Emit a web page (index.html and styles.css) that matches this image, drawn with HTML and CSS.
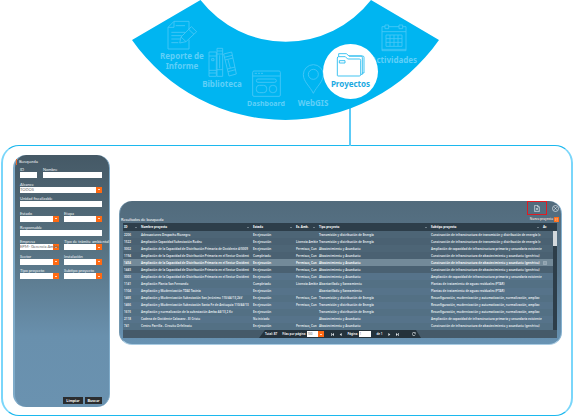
FILE: index.html
```html
<!DOCTYPE html>
<html lang="es">
<head>
<meta charset="utf-8">
<meta name="viewport" content="width=device-width, initial-scale=1">
<title>Proyectos</title>
<link rel="stylesheet" href="styles.css">
</head>
<body>
<nav class="arc" aria-label="Módulos">
  <svg class="arc-shape" viewBox="132 0 310 146" aria-hidden="true">
    <path d="M350 100V146" fill="none" stroke="#5ccbf7" stroke-width="2"/>
    <path d="M200.500 0A108 108 0 0 0 371 0L439 40A187.300 187.300 0 0 1 132 40Z" fill="#00b5f1"/>
  </svg>
  <a class="item reporte" href="#reporte">
    <svg viewBox="140 62 90 90" width="30" height="30"><path d="M206 90V66H161L143 84V149H206V121M161 66V84H143M166 79H194M153 99H194M153 109H184M153 119H179M153 130H174M178 131L182 113L213 82L229 97L197 127ZM182 113L197 127M205 90L221 105"/></svg>
    <span>Reporte de Informe</span>
  </a>
  <a class="item biblioteca" href="#biblioteca">
    <svg viewBox="268 139 87 90" width="29" height="30"><path d="M271 154H293V227H271ZM271 166H293M271 209H293M271 217H293M279 174H286V180H279ZM295 143H312V227H295ZM295 151H312M295 160H312M295 207H312M303 164V203M315 160L339 154L353 220L331 226ZM317 170L341 164M319 178L343 172M326 205L349 199M328 213L351 207M328 177L335 202"/></svg>
    Biblioteca
  </a>
  <a class="item dashboard" href="#dashboard">
    <svg viewBox="394 208 87 81" width="29" height="27"><path d="M400 211H475Q479 211 479 215V283Q479 287 475 287H400Q396 287 396 283V215Q396 211 400 211ZM396 226H479M402 218H409M412 218H418M421 218H427"/><rect x="407" y="235" width="60" height="10" rx="5"/><rect x="407" y="254" width="31" height="22" rx="9"/><rect x="446" y="254" width="22" height="22" rx="10"/></svg>
    Dashboard
  </a>
  <a class="item webgis" href="#webgis">
    <svg viewBox="63 190 66 90" width="22" height="30"><path d="M97 278C87 257 67 243 67 222A30 30 0 0 1 127 222C127 243 107 257 97 278Z"/><circle cx="97" cy="221" r="15"/></svg>
    WebGIS
  </a>
  <a class="item actividades" href="#actividades">
    <svg viewBox="302 70 78 84" width="26" height="28"><path d="M314 78H305V150H377V78H367M325 78H356M305 93H377M314 73H325V84H314ZM356 73H367V84H356ZM317 103H365V137H317ZM317 114H365M317 125H365M329 103V137M341 103V137M353 103V137M305 146H377"/></svg>
    Actividades
  </a>
  <a class="item proyectos" href="#proyectos" aria-current="page">
    <svg viewBox="170 155 87 75" width="29" height="25"><path d="M174 225V173Q174 169 178 169H198L205 176H240Q244 176 244 180V223Q244 227 240 227H176Q174 227 174 225ZM178 169V160H201L209 167H246Q249 167 249 171V222H244M209 167H250Q254 167 254 171V218H249M180 181H197V188H180Z"/></svg>
    Proyectos
  </a>
</nav>

<main class="frame">
  <form class="search">
    <h2>Busqueda</h2>
    <div class="fields">
      <div class="field short"><label for="id">ID</label><input id="id"></div>
      <div class="field long"><label for="nombre">Nombre</label><input id="nombre"></div>
      <div class="field full"><label for="alcance">Alcance</label><select id="alcance"><option>TODOS</option></select></div>
      <div class="field full"><label for="unidad">Unidad fiscalizable</label><input id="unidad"></div>
      <div class="field left"><label for="estado">Estado</label><select id="estado"><option></option></select></div>
      <div class="field right"><label for="etapa">Etapa</label><select id="etapa"><option></option></select></div>
      <div class="field full"><label for="resp">Responsable</label><input id="resp"></div>
      <div class="field left"><label for="empresa">Empresa</label><select id="empresa"><option>EPM- Gerencia Ambie</option></select></div>
      <div class="field right"><label for="tramite">Tipo de trámite ambiental</label><select id="tramite"><option></option></select></div>
      <div class="field left"><label for="sector">Sector</label><select id="sector"><option></option></select></div>
      <div class="field right"><label for="instalacion">Instalación</label><select id="instalacion"><option></option></select></div>
      <div class="field left"><label for="tipo">Tipo proyecto</label><select id="tipo"><option></option></select></div>
      <div class="field right"><label for="subtipo">Subtipo proyecto</label><select id="subtipo"><option></option></select></div>
    </div>
    <div class="actions"><button type="button">Limpiar</button><button type="button">Buscar</button></div>
  </form>

  <section class="results">
    <div class="toolbar">
      <button class="export" type="button" aria-label="Exportar"><svg viewBox="0 0 18 21" width="6" height="7"><path d="M2 1H11L16 6V20H2ZM11 1V6H16M6 9L12 16M12 9L6 16"/></svg></button>
      <button class="close" type="button" aria-label="Cerrar"><svg viewBox="0 0 21 21" width="7" height="7"><circle cx="10.500" cy="10.500" r="9"/><path d="M7 7L14 14M14 7L7 14"/></svg></button>
    </div>
    <div class="heading">
      <h2>Resultados de busqueda</h2>
      <button class="new" type="button">Nuevo proyecto <svg viewBox="0 0 15 15" width="5" height="5"><path d="M0 0H15V15H0Z" fill="#ff6a13"/><path d="M4 3V12M7 4H12M7 8H12M7 12H12" stroke="#ffd0b0" stroke-width="1.500"/></svg></button>
    </div>
    <div class="grid">
      <table>
        <colgroup><col class="c-id"><col class="c-name"><col class="c-state"><col class="c-env"><col class="c-type"><col><col class="c-act"></colgroup>
        <thead><tr><th class="sort">ID</th><th class="sort">Nombre proyecto</th><th class="sort">Estado</th><th class="sort">Es. Amb.</th><th class="sort">Tipo proyecto</th><th class="sort">Subtipo proyecto</th><th>Ac</th></tr></thead>
        <tbody>
          <tr><td>2206</td><td>Adecuaciones Despacho Rionegro</td><td>En ejecución</td><td></td><td>Transmisión y distribución de Energía</td><td>Construcción de infraestructura de transmisión y distribución de energía (c</td><td></td></tr>
          <tr><td>1522</td><td>Ampliación Capacidad Subestación Rodeo</td><td>En ejecución</td><td>Licencia Ambie</td><td>Transmisión y distribución de Energía</td><td>Construcción de infraestructura de transmisión y distribución de energía (c</td><td></td></tr>
          <tr><td>3002</td><td>Ampliación de la Capacidad de Distribución Primaria de Occidente 4/0009</td><td>En ejecución</td><td>Permisos, Con</td><td>Abastecimiento y Acueducto</td><td>Ampliación de capacidad de infraestructura primaria y secundaria existente</td><td></td></tr>
          <tr><td>1194</td><td>Ampliación de la Capacidad de Distribución Primaria en el Sector Occident</td><td>Completado</td><td>Permisos, Con</td><td>Abastecimiento y Acueducto</td><td>Construcción de infraestructura de abastecimiento y acueducto (genérico)</td><td></td></tr>
          <tr class="selected"><td>1434</td><td>Ampliación de la Capacidad de Distribución Primaria en el Sector Occident</td><td>En ejecución</td><td>Permisos, Con</td><td>Abastecimiento y Acueducto</td><td>Construcción de infraestructura de abastecimiento y acueducto (genérico)</td><td><svg viewBox="0 0 12 15" width="4" height="4"><path d="M1 1H11V14H1ZM4 6H8M4 10H8"/></svg></td></tr>
          <tr><td>1443</td><td>Ampliación de la Capacidad de Distribución Primaria en el Sector Occident</td><td>En ejecución</td><td>Permisos, Con</td><td>Abastecimiento y Acueducto</td><td>Construcción de infraestructura de abastecimiento y acueducto (genérico)</td><td></td></tr>
          <tr><td>3003</td><td>Ampliación de la Capacidad de Distribución Primaria en el Sector Occident</td><td>En ejecución</td><td>Permisos, Con</td><td>Abastecimiento y Acueducto</td><td>Ampliación de capacidad de infraestructura primaria y secundaria existente</td><td></td></tr>
          <tr><td>1141</td><td>Ampliación Planta San Fernando</td><td>Completado</td><td>Licencia Ambie</td><td>Alcantarillado y Saneamiento</td><td>Plantas de tratamiento de aguas residuales (PTAR)</td><td></td></tr>
          <tr><td>1104</td><td>Ampliación y Modernización TDAI Tasinia</td><td>En ejecución</td><td></td><td>Alcantarillado y Saneamiento</td><td>Plantas de tratamiento de aguas residuales (PTAR)</td><td></td></tr>
          <tr><td>1465</td><td>Ampliación y Modernización Subestación San Jerónimo 110/44/13,2kV</td><td>En ejecución</td><td>Permisos, Con</td><td>Transmisión y distribución de Energía</td><td>Reconfiguración, modernización y automatización, normalización, ampliac</td><td></td></tr>
          <tr><td>1466</td><td>Ampliación y Modernización Subestación Santa Fe de Antioquia 110/44/13</td><td>En ejecución</td><td>Permisos, Con</td><td>Transmisión y distribución de Energía</td><td>Reconfiguración, modernización y automatización, normalización, ampliac</td><td></td></tr>
          <tr><td>1615</td><td>Ampliación y normalización de la subestación Amba 44/13,2 Kv</td><td>En ejecución</td><td></td><td>Transmisión y distribución de Energía</td><td>Reconfiguración, modernización y automatización, normalización, ampliac</td><td></td></tr>
          <tr><td>2118</td><td>Cadena de Occidente Calasanz - El Cristo</td><td>No iniciado</td><td></td><td>Abastecimiento y Acueducto</td><td>Ampliación de capacidad de infraestructura primaria y secundaria existente</td><td></td></tr>
          <tr><td>741</td><td>Centro Parrilla - Circuito Orfelinato</td><td>En ejecución</td><td>Permisos, Con</td><td>Abastecimiento y Acueducto</td><td>Construcción de infraestructura de abastecimiento y acueducto (genérico)</td><td></td></tr>
        </tbody>
      </table>
      <div class="scroll"><div class="thumb"></div></div>
    </div>
    <div class="footer">
      <div class="pager">
        <span>Total: 87</span>
        <label class="size">Filas por página <select><option>100</option></select></label>
        <button type="button" aria-label="Primera"><svg viewBox="0 0 9 9" width="3" height="3"><path d="M0 0H2V9H0ZM9 0V9L3 4.500Z"/></svg></button>
        <button type="button" aria-label="Anterior"><svg viewBox="0 0 9 9" width="3" height="3"><path d="M8 0V9L2 4.500Z"/></svg></button>
        <label class="page">Página <input value="1"></label>
        <span>de 1</span>
        <button type="button" aria-label="Siguiente"><svg viewBox="0 0 9 9" width="3" height="3"><path d="M1 0V9L7 4.500Z"/></svg></button>
        <button type="button" aria-label="Última"><svg viewBox="0 0 9 9" width="3" height="3"><path d="M7 0H9V9H7ZM0 0V9L6 4.500Z"/></svg></button>
        <button class="reload" type="button" aria-label="Recargar"><svg viewBox="0 0 12 12" width="4" height="4"><path d="M10 4A5 5 0 1 0 10 8M10 1V4H7" fill="none" stroke="#dfe5e9" stroke-width="2"/></svg></button>
      </div>
    </div>
  </section>
</main>
</body>
</html>
```
FILE: styles.css
```css
* { box-sizing: border-box; }

body {
  margin: 0;
  background: #fff;
  font-family: "Noto Sans", "Open Sans", sans-serif;
}

h2, button, input, select {
  margin: 0;
  padding: 0;
  border: 0;
  border-radius: 0;
  font-family: inherit;
}

button { background: none; }
svg { display: block; }

/* Curved module menu */
.arc {
  position: relative;
  width: 310px;
  margin: 0 auto;
}

.item {
  position: absolute;
  width: 60px;
  color: #5fcff8;
  font-size: 8px;
  font-weight: 700;
  line-height: 9px;
  text-align: center;
  text-decoration: none;
}

.item svg {
  margin: 0 auto 2px;
  fill: none;
  stroke: #4cc8f6;
  stroke-width: 2.5;
}

.reporte { left: 20px; top: 20px; }
.reporte svg { margin-bottom: 1px; }

.reporte span {
  display: block;
  padding: 0 6px;
  line-height: 10px;
}

.biblioteca { left: 60px; top: 47px; }
.dashboard { left: 104px; top: 70px; font-size: 7px; }
.webgis { left: 151px; top: 64px; line-height: 18px; }
.webgis svg { margin-bottom: 0; }
.actividades { left: 232px; top: 24px; line-height: 12px; }

.proyectos {
  left: 191px;
  top: 44px;
  width: 55px;
  height: 55px;
  padding-top: 8px;
  border-radius: 50%;
  background: #fff;
  color: #1aa9e1;
  line-height: 10px;
}

.proyectos svg { stroke: #1cb8ee; }

/* Outer frame */
.frame {
  display: grid;
  grid-template-columns: 97px minmax(0, 1fr);
  column-gap: 9px;
  align-items: start;
  margin: -1px 1px 0;
  padding: 9px 9px 8px 10px;
  border: 1px solid #1cb8ee;
  border-left: 2px solid #7ad6fa;
  border-right: 2px solid #7ad6fa;
  border-radius: 18px;
}

/* Search form */
.search {
  display: flex;
  flex-direction: column;
  height: 252px;
  padding: 4px 7px 3px 5px;
  border-left: 2px solid #7fabc9;
  border-right: 1px solid #7fabc9;
  border-radius: 13px;
  background: linear-gradient(#455966, #56707f 35%, #6990ad 72%, #6a92b0);
  color: #f0f4f6;
}

.search h2 {
  margin-left: -4px;
  padding-left: 2px;
  border-left: 1px solid #e8672a;
  font-size: 4px;
  font-weight: 400;
  line-height: 6px;
}

.fields {
  display: grid;
  grid-template-columns: 17px 6px 16px 5px minmax(0, 1fr);
  grid-auto-rows: 1fr;
  height: 115px;
  margin-top: -1px;
}

.field {
  display: flex;
  flex-direction: column;
  justify-content: flex-end;
  min-width: 0;
}

.short { grid-column: 1; }
.long { grid-column: 3 / 6; }
.full { grid-column: 1 / 6; }
.left { grid-column: 1 / 4; }
.right { grid-column: 5; }

.field label {
  font-family: Lato, sans-serif;
  font-size: 4px;
  line-height: 5px;
  white-space: nowrap;
}

.field input, .field select {
  width: 100%;
  height: 6px;
  background-color: #fff;
  color: #666;
  font-family: Lato, sans-serif;
  font-size: 4px;
  line-height: 6px;
}

select {
  appearance: none;
  background-color: #fff;
  background-image:
    linear-gradient(#ffd9c2, #ffd9c2),
    linear-gradient(#ff6a13, #ff6a13);
  background-position: right 2px center, right center;
  background-repeat: no-repeat;
  background-size: 2px 1px, 6px 100%;
}

.actions {
  display: flex;
  justify-content: flex-end;
  gap: 2px;
  margin-top: auto;
}

.actions button {
  width: 17px;
  height: 7px;
  background: #2b2d2f;
  color: #fff;
  font-family: Lato, sans-serif;
  font-size: 4px;
  font-weight: 700;
  line-height: 7px;
}

.actions button:first-child { width: 20px; }

/* Results panel */
.results {
  margin-top: 46px;
  padding: 0 4px 6px 3px;
  border: 1px solid #7397af;
  border-top: 0;
  border-right-color: #86b2d0;
  border-bottom: 1px solid #a9cbe2;
  border-radius: 13px;
  background: linear-gradient(#526b7c, #5a788e 50%, #6893b3);
  color: #e6ecf0;
}

.toolbar {
  display: flex;
  justify-content: flex-end;
  align-items: center;
  gap: 5px;
  height: 14px;
  margin-right: -2px;
}

.toolbar svg {
  margin: 0 auto;
  fill: none;
  stroke: #e6edf2;
  stroke-width: 2;
}

.export {
  width: 20px;
  height: 14px;
  border: 1px solid #e01b22;
}

.heading {
  display: flex;
  justify-content: space-between;
  align-items: center;
  height: 8px;
  margin: 0 -2px;
}

.heading h2 {
  color: #fff;
  font-family: Lato, sans-serif;
  font-size: 4px;
  font-weight: 400;
}

.new {
  display: flex;
  align-items: center;
  gap: 1px;
  color: #f3dcd0;
  font-size: 3px;
  font-weight: 600;
}

.grid {
  display: flex;
  background: #2d3e4a;
}

table {
  flex: 1;
  width: 0;
  height: 107px;
  border-collapse: collapse;
  table-layout: fixed;
  font-size: 3px;
  font-weight: 600;
  line-height: 4px;
}

.c-id { width: 17px; }
.c-name { width: 112px; }
.c-state { width: 43px; }
.c-env { width: 23px; }
.c-type { width: 112px; }
.c-act { width: 11px; }

th, td {
  overflow: hidden;
  padding: 0 0 0 1px;
  text-align: left;
  vertical-align: middle;
  white-space: nowrap;
}

th {
  height: 8px;
  background: #2d3e4a;
  color: #fff;
  font-weight: 700;
}

.sort::after {
  content: "";
  float: right;
  width: 2px;
  height: 1px;
  margin: 2px 3px 0 0;
  background: #6d7d88;
}

tbody tr { background: #4d6576; }
tbody tr:nth-child(even) { background: #4a6172; }
tbody tr:nth-child(n+7) { background: #56738a; }
tbody tr:nth-child(2n+8) { background: #537084; }
tbody .selected { background: #738a99; color: #fff; }

td svg {
  fill: none;
  stroke: #c5d0d8;
  stroke-width: 2;
}

.scroll {
  width: 4px;
  padding-top: 8px;
}

.thumb {
  height: 15px;
  background: #d3d9dd;
}

.footer {
  display: flex;
  justify-content: center;
  height: 8px;
  background: #455a69;
}

.pager {
  display: flex;
  align-items: center;
  gap: 5px;
  width: 162px;
  padding: 0 5px 0 6px;
  background: #24323b;
  clip-path: polygon(6px 0, calc(100% - 5px) 0, 100% 100%, 0 100%);
  color: #fff;
  font-size: 3px;
  font-weight: 600;
  white-space: nowrap;
}

.pager label {
  display: flex;
  align-items: center;
  gap: 2px;
}

.pager select, .pager input {
  width: 17px;
  height: 6px;
  color: #555;
  font-size: 3px;
}

.size { margin-right: 2px; }
.pager input { width: 12px; background: #fff; }
.pager svg { fill: #dfe5e9; }
.reload { margin-left: auto; }
```
